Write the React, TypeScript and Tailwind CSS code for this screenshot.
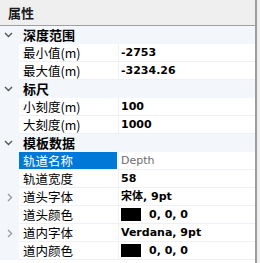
import React from "react";

type Row =
  | { kind: "cat"; label: string }
  | {
      kind: "prop";
      label: string;
      value: string;
      expand?: boolean;
      swatch?: boolean;
      selected?: boolean;
      muted?: boolean;
    };

const rows: Row[] = [
  { kind: "cat", label: "深度范围" },
  { kind: "prop", label: "最小值(m)", value: "-2753" },
  { kind: "prop", label: "最大值(m)", value: "-3234.26" },
  { kind: "cat", label: "标尺" },
  { kind: "prop", label: "小刻度(m)", value: "100" },
  { kind: "prop", label: "大刻度(m)", value: "1000" },
  { kind: "cat", label: "模板数据" },
  { kind: "prop", label: "轨道名称", value: "Depth", selected: true, muted: true },
  { kind: "prop", label: "轨道宽度", value: "58" },
  { kind: "prop", label: "道头字体", value: "宋体, 9pt", expand: true },
  { kind: "prop", label: "道头颜色", value: "0, 0, 0", swatch: true },
  { kind: "prop", label: "道内字体", value: "Verdana, 9pt", expand: true },
  { kind: "prop", label: "道内颜色", value: "0, 0, 0", swatch: true },
];

const cjk = "font-['Noto_Sans_CJK_SC','Noto_Sans',sans-serif]";
const valueFont = "font-['DejaVu_Sans','Noto_Sans_CJK_SC',sans-serif]";

function ChevronDown() {
  return (
    <svg width="9" height="6" viewBox="0 0 9 6" className="text-[#555]">
      <path d="M1 1 L4.5 4.5 L8 1" fill="none" stroke="currentColor" strokeWidth="1.4" />
    </svg>
  );
}

function ChevronRight() {
  return (
    <svg width="6" height="9" viewBox="0 0 6 9" className="text-[#9a9a9a]">
      <path d="M1 1 L4.5 4.5 L1 8" fill="none" stroke="currentColor" strokeWidth="1.4" />
    </svg>
  );
}

export default function App() {
  return (
    <div className="flex w-[260px] h-[263px] bg-[#f0f0f0] overflow-hidden">
      <div className="flex flex-col w-[255px] bg-white">
        {/* header */}
        <div className="h-[26px] shrink-0 bg-[#efefef] border-b border-[#a0a0a0] flex items-center pl-2">
          <span className={`${cjk} text-[13px] font-bold text-[#1a1a1a] leading-[18px]`}>属性</span>
        </div>

        {rows.map((r, i) =>
          r.kind === "cat" ? (
            <div key={i} className="h-[18px] shrink-0 flex items-center bg-[#f3f6fb] overflow-hidden">
              <div className="w-[19px] flex justify-center pr-[3px]">
                <ChevronDown />
              </div>
              <span className={`${cjk} pl-1 text-[13px] font-bold text-black leading-[16px]`}>{r.label}</span>
            </div>
          ) : (
            <div key={i} className="h-[18px] shrink-0 flex overflow-hidden">
              <div className="w-[19px] bg-[#f3f6fb] flex items-center justify-center pl-[1px]">
                {r.expand && <ChevronRight />}
              </div>
              <div className="w-[100px] border-b border-r border-[#edf0f5] bg-white">
                <div
                  className={`h-full w-[98px] flex items-center pl-1 ${cjk} text-[12.5px] leading-[16px] ${
                    r.selected ? "bg-[#0078d7] text-white" : "text-black"
                  }`}
                >
                  {r.label}
                </div>
              </div>
              <div className="flex-1 border-b border-[#edf0f5] flex items-center pl-[2px]">
                {r.swatch && <div className="w-[20px] h-[13px] bg-black mr-[8px]" />}
                <span
                  className={`${valueFont} text-[11px] leading-[16px] ${
                    r.muted ? "text-[#6d6d6d] font-normal" : "text-black font-bold"
                  }`}
                >
                  {r.value}
                </span>
              </div>
            </div>
          )
        )}
      </div>
      <div className="w-[2px] bg-[#9c9c9c]" />
    </div>
  );
}
